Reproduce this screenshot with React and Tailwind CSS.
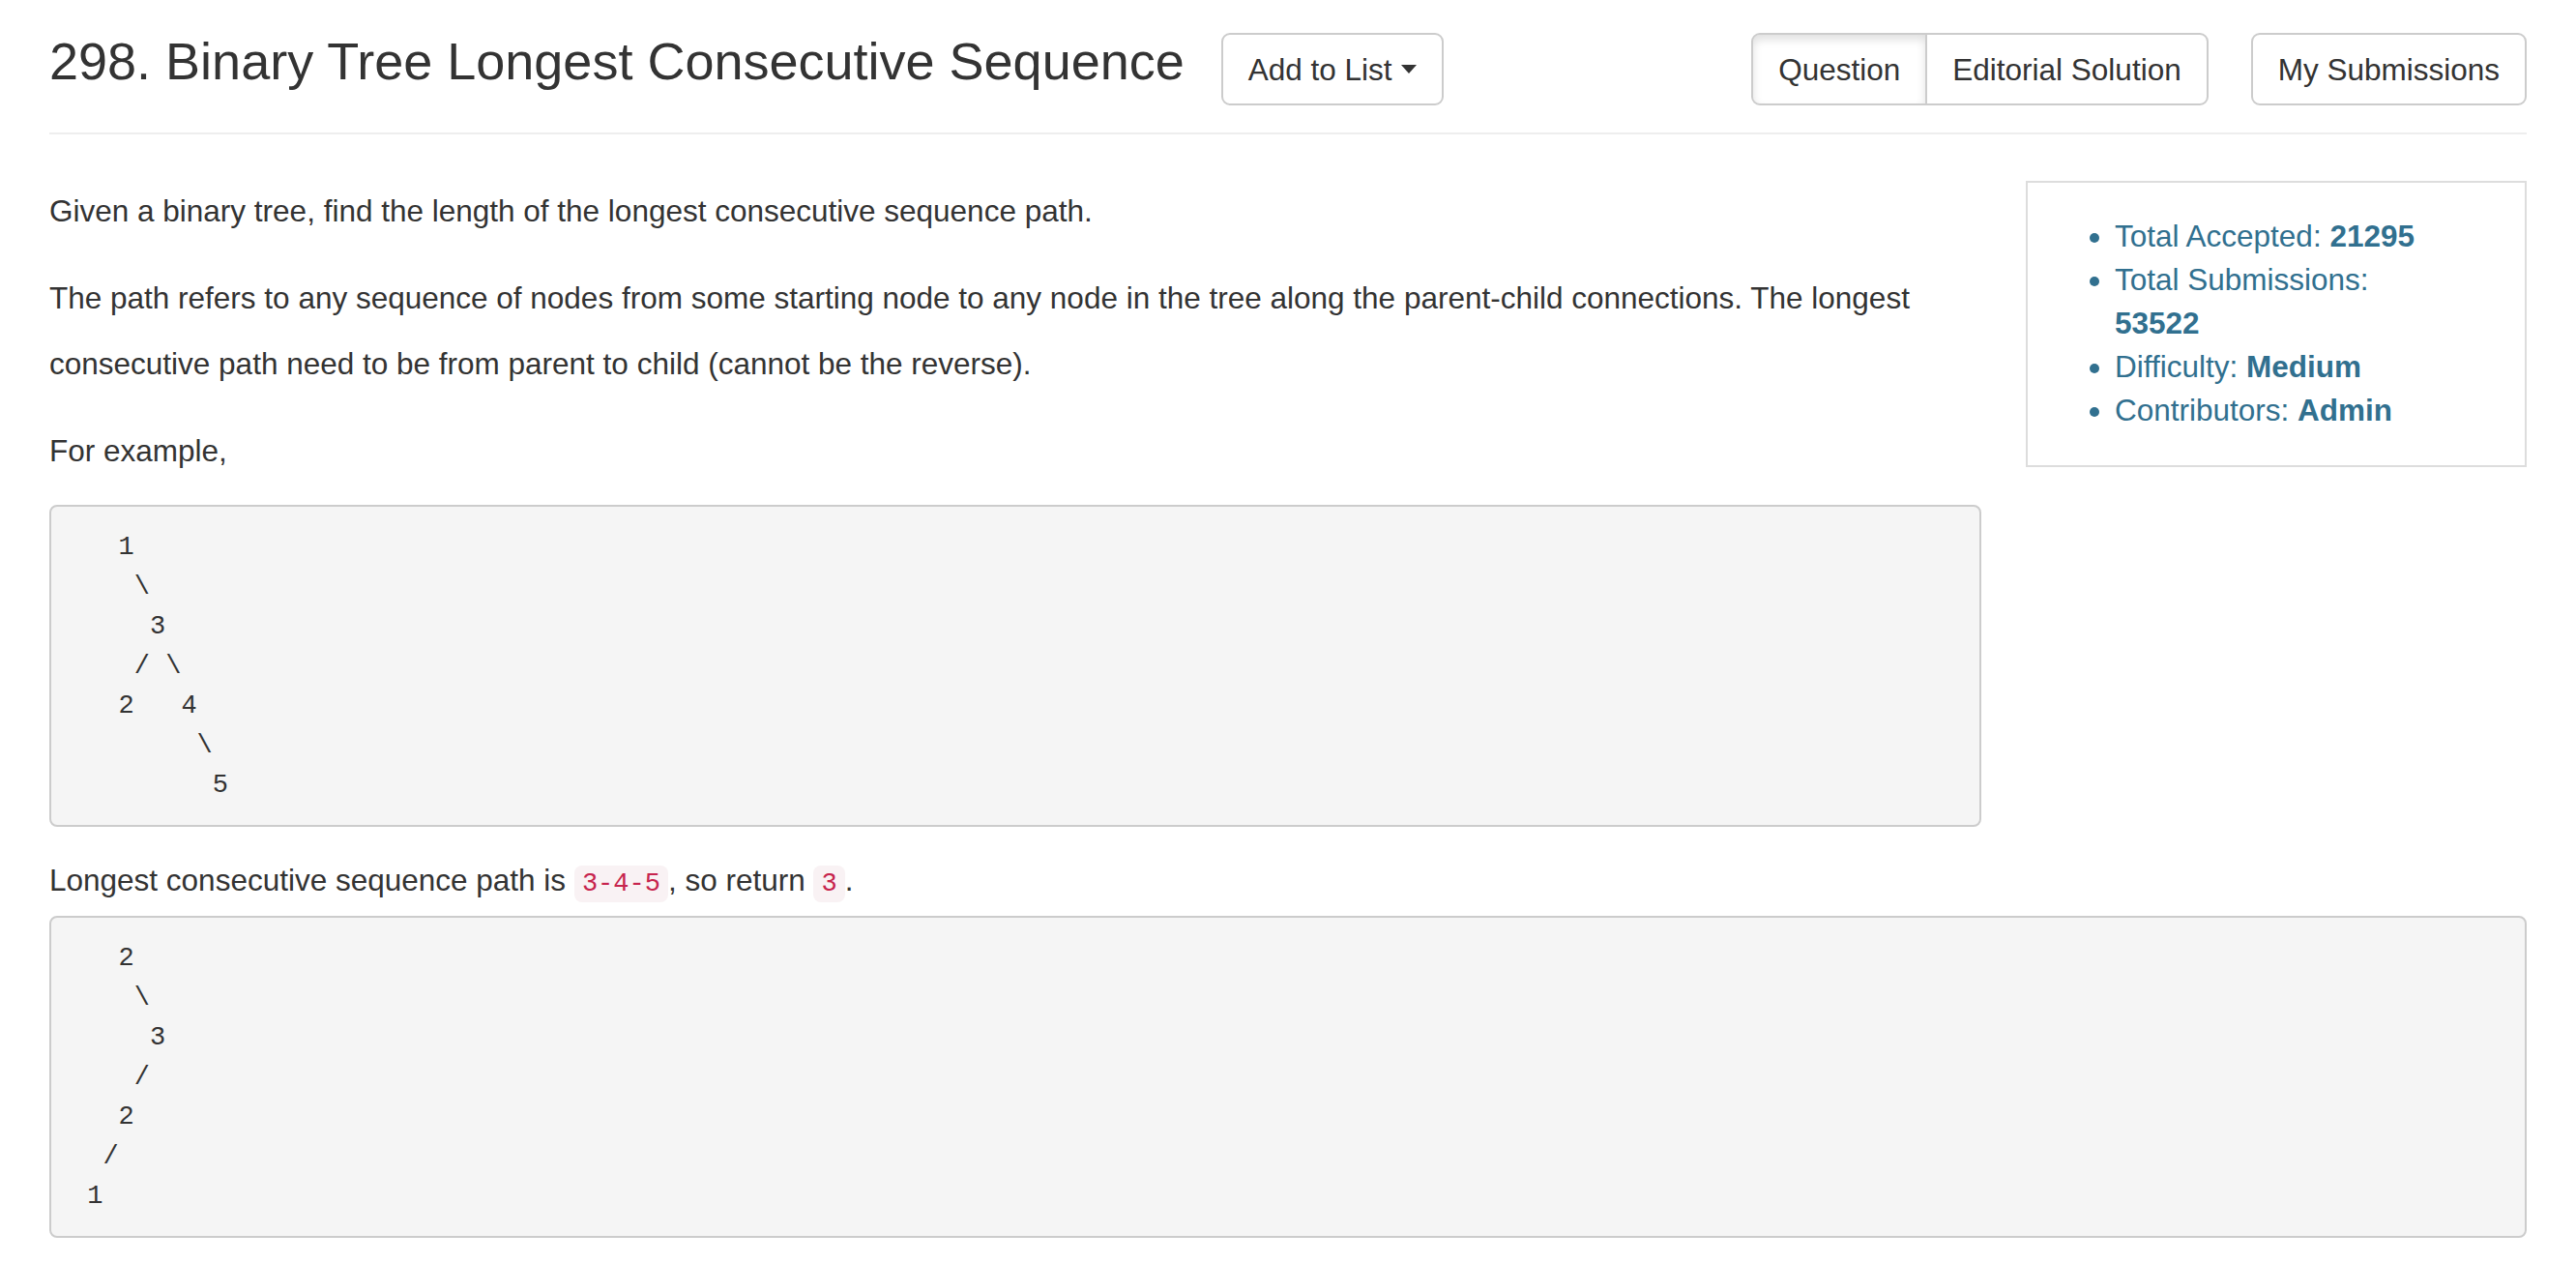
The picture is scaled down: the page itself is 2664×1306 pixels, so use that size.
import React from 'react'

const btn = "border-2 border-[#ccc] bg-white text-[#333] text-[31.5px] leading-[44px] py-[13.5px] px-[26px] whitespace-nowrap"

const Code = ({ children }) => (
  <code className="font-['Liberation_Mono',monospace] text-[27px] text-[#c7254e] bg-[#f9f2f4] rounded-[8px] px-[8px] py-[4px]">
    {children}
  </code>
)

const Pre = ({ text, className }) => (
  <pre className={"overflow-auto bg-[#f5f5f5] border-2 border-[#ccc] rounded-[8px] px-[21px] pt-[22px] pb-[20px] font-['Liberation_Mono',monospace] text-[27px] leading-[41px] text-[#333] " + (className || "")}>
    {text}
  </pre>
)

const tree1 = `   1
    \\
     3
    / \\
   2   4
        \\
         5`

const tree2 = `   2
    \\
     3
    /
   2
  /
 1`

const App = () => {
  return (
    <div className="min-h-screen bg-white px-[51px] font-['Liberation_Sans',Arial,sans-serif] text-[#333]">
      {/* header */}
      <div className="flex items-start justify-between pt-[34px] pb-[28px] border-b-2 border-[#eee]">
        <div className="flex items-start">
          <h3 className="text-[54px] leading-[59px] font-normal whitespace-nowrap">298. Binary Tree Longest Consecutive Sequence</h3>
          <button className={btn + " ml-[38px] rounded-[9px] flex items-center"}>
            Add to List
            <span className="inline-block ml-[9px] w-0 h-0 border-t-[9px] border-x-[8px] border-x-transparent border-t-[#333]"></span>
          </button>
        </div>
        <div className="flex items-start">
          <div className="flex">
            <button className={btn + " rounded-l-[9px] bg-[#e6e6e6] border-[#adadad] shadow-[inset_0_5px_10px_rgba(0,0,0,0.125)]"}>Question</button>
            <button className={btn + " rounded-r-[9px] -ml-[2px]"}>Editorial Solution</button>
          </div>
          <button className={btn + " ml-[44px] rounded-[9px]"}>My Submissions</button>
        </div>
      </div>

      {/* body part */}
      <div className="pt-[46px] text-[31.5px]">
        <div className="flex items-start gap-[46px]">
          <div className="flex-1 min-w-0">
            <p className="leading-[67.5px] mb-[22.5px]">Given a binary tree, find the length of the longest consecutive sequence path.</p>
            <p className="leading-[67.5px] mb-[22.5px]">The path refers to any sequence of nodes from some starting node to any node in the tree along the parent-child connections. The longest consecutive path need to be from parent to child (cannot be the reverse).</p>
            <p className="leading-[67.5px] mb-[22px]">For example,</p>
            <Pre text={tree1} className="mb-[24px]" />
          </div>
          <div className="w-[518px] mt-[1.5px] border-2 border-[#ddd] pt-[33px] pb-[34px] pl-[90px] pr-[88px]">
            <ul className="list-disc text-[#31708f] leading-[45px]">
              <li>Total Accepted: <b>21295</b></li>
              <li>Total Submissions: <b>53522</b></li>
              <li>Difficulty: <b>Medium</b></li>
              <li>Contributors: <b>Admin</b></li>
            </ul>
          </div>
        </div>
        <p className="leading-[63px] mb-[1px]">Longest consecutive sequence path is <Code>3-4-5</Code>, so return <Code>3</Code>.</p>
        <Pre text={tree2} />
      </div>
    </div>
  )
}

export default App
